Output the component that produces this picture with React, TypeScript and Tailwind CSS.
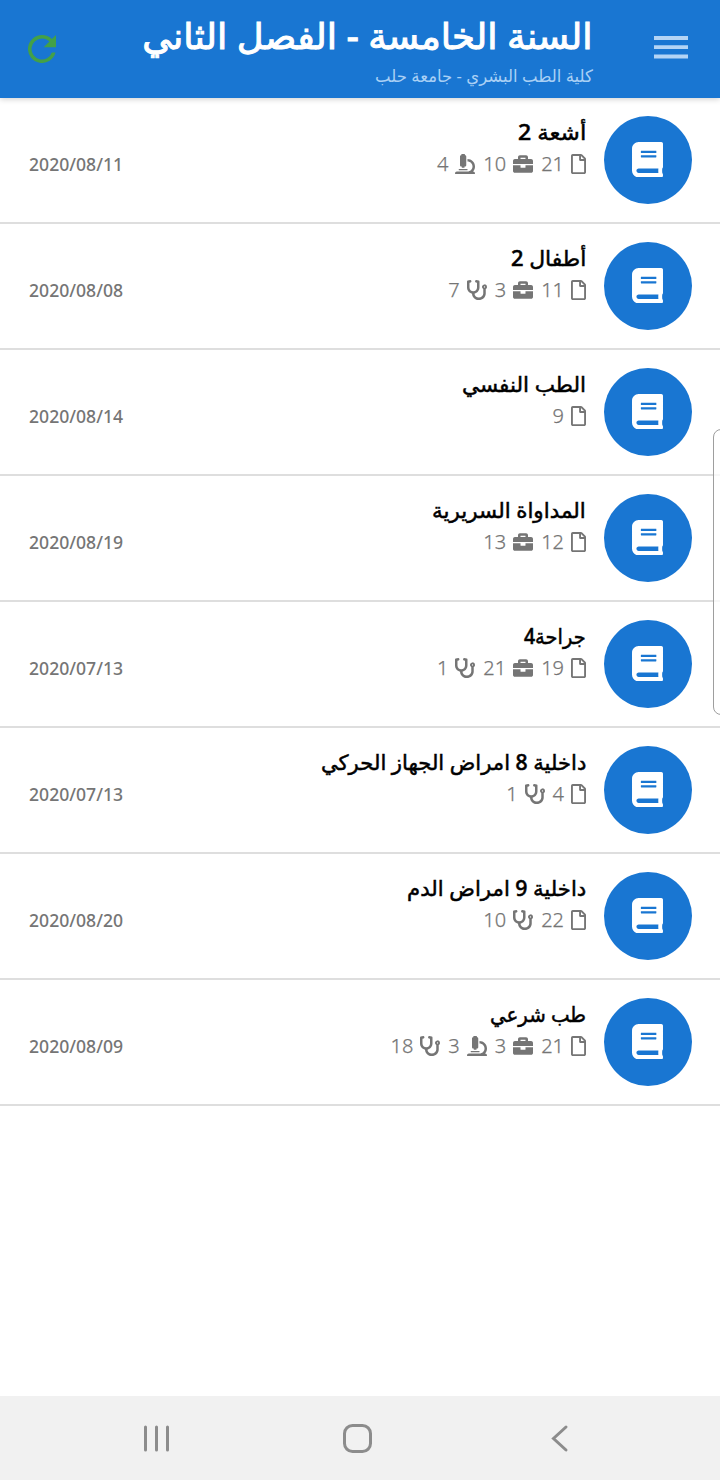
import { FaBook, FaBriefcase, FaMicroscope, FaRegFile, FaStethoscope } from "react-icons/fa";

type TStat = { kind: "file" | "case" | "lab" | "clinic"; count: number };

type TCourse = {
  title: string;
  date: string;
  stats: TStat[];
  fit: string;
};

const courses: TCourse[] = [
  {
    title: "أشعة 2",
    date: "2020/08/11",
    fit: "scale-x-[1.097]",
    stats: [
      { kind: "file", count: 21 },
      { kind: "case", count: 10 },
      { kind: "lab", count: 4 },
    ],
  },
  {
    title: "أطفال 2",
    date: "2020/08/08",
    fit: "scale-x-[1.042]",
    stats: [
      { kind: "file", count: 11 },
      { kind: "case", count: 3 },
      { kind: "clinic", count: 7 },
    ],
  },
  {
    title: "الطب النفسي",
    date: "2020/08/14",
    fit: "scale-x-[1.025]",
    stats: [{ kind: "file", count: 9 }],
  },
  {
    title: "المداواة السريرية",
    date: "2020/08/19",
    fit: "scale-x-[1.02]",
    stats: [
      { kind: "file", count: 12 },
      { kind: "case", count: 13 },
    ],
  },
  {
    title: "جراحة4",
    date: "2020/07/13",
    fit: "scale-x-[0.925]",
    stats: [
      { kind: "file", count: 19 },
      { kind: "case", count: 21 },
      { kind: "clinic", count: 1 },
    ],
  },
  {
    title: "داخلية 8 امراض الجهاز الحركي",
    date: "2020/07/13",
    fit: "scale-x-[1.008]",
    stats: [
      { kind: "file", count: 4 },
      { kind: "clinic", count: 1 },
    ],
  },
  {
    title: "داخلية 9 امراض الدم",
    date: "2020/08/20",
    fit: "scale-x-[1.011]",
    stats: [
      { kind: "file", count: 22 },
      { kind: "clinic", count: 10 },
    ],
  },
  {
    title: "طب شرعي",
    date: "2020/08/09",
    fit: "scale-x-[0.941]",
    stats: [
      { kind: "file", count: 21 },
      { kind: "case", count: 3 },
      { kind: "lab", count: 3 },
      { kind: "clinic", count: 18 },
    ],
  },
];

const icons = {
  file: FaRegFile,
  case: FaBriefcase,
  lab: FaMicroscope,
  clinic: FaStethoscope,
};

const Header = () => (
  <header className="relative z-10 flex h-[98px] bg-[#1976d2] shadow-[0_1px_6px_rgba(0,0,0,0.2)]">
    <svg viewBox="0 0 34 24" className="mt-[35px] mr-8 h-6 w-[34px] fill-[#b3d4f5]">
      <path d="M0 1h34v4H0zM0 10.3h34v3.6H0zM0 19.5h34v4H0z" />
    </svg>
    <div className="mr-[61px] flex-1">
      <h1 className="mt-[11px] w-fit origin-right scale-x-[1.027] text-[36px] leading-[50px] font-medium whitespace-nowrap text-white [-webkit-text-stroke:1px_white]">
        السنة الخامسة - الفصل الثاني
      </h1>
      <p className="mt-[5px] w-fit origin-right scale-x-[0.973] text-[17px] leading-[20px] whitespace-nowrap text-[#a9d0f5]">
        كلية الطب البشري - جامعة حلب
      </p>
    </div>
    <svg viewBox="4 4 16 16" className="mt-[35px] ml-7 h-7 w-7 fill-[#43a047]">
      <path d="M17.65 6.35A7.958 7.958 0 0 0 12 4a8 8 0 1 0 7.73 10h-2.08A6 6 0 1 1 12 6c1.66 0 3.14.69 4.22 1.78L13 11h7V4l-2.35 2.35z" />
    </svg>
  </header>
);

const Course = ({ title, date, stats, fit }: TCourse) => (
  <li className="flex h-[126px] border-b-2 border-[#dedede] pt-[18px] pr-7 pl-[29px]">
    <div className="flex h-[88px] w-[88px] items-center justify-center rounded-full bg-[#1976d2]">
      <FaBook className="mr-px mb-px h-[35.4px] w-[31px] text-white" />
    </div>
    <div className="mr-[18px] flex-1">
      <h2
        className={`w-fit origin-right text-[21px] leading-8 font-medium whitespace-nowrap text-black [-webkit-text-stroke:0.5px_black] ${fit}`}
      >
        {title}
      </h2>
      <div className="flex h-8 items-center gap-2">
        {stats.map(({ kind, count }) => {
          const Icon = icons[kind];
          return (
            <div key={kind} className="flex items-center gap-[7px] text-[#757575]">
              <Icon className={kind === "file" ? "h-5 w-[15px]" : "h-5 w-5"} />
              <span className="text-[20px] leading-8 font-light [-webkit-text-stroke:0.25px_#757575]">
                {count}
              </span>
            </div>
          );
        })}
      </div>
    </div>
    <time className="mt-[34px] text-[17.6px] leading-7 font-medium text-[#757575]">{date}</time>
  </li>
);

const NavBar = () => (
  <nav className="h-[84px] bg-[#f1f1f1]">
    <svg
      viewBox="0 0 720 84"
      className="h-full w-full fill-none stroke-[#8c8c8c]"
      strokeWidth="3"
      strokeLinecap="round"
    >
      <path d="M145.5 31v23M156.500 31v23M167.500 31v23" />
      <rect x="344.500" y="29.500" width="26" height="26" rx="8" />
      <path d="M566 31l-12.500 11.500L566 54" />
    </svg>
  </nav>
);

const App = () => {
  return (
    <div
      dir="rtl"
      className="relative flex h-[1480px] w-[720px] flex-col overflow-hidden bg-white font-['Noto_Sans','DejaVu_Sans',sans-serif]"
    >
      <Header />
      <ul className="flex-1">
        {courses.map((course) => (
          <Course key={course.title} {...course} />
        ))}
      </ul>
      <NavBar />
      {/* edge panel handle */}
      <div className="absolute top-[429px] left-[713px] h-[286px] w-5 rounded-lg border border-[#9e9e9e] bg-white/75" />
    </div>
  );
};

export default App;
